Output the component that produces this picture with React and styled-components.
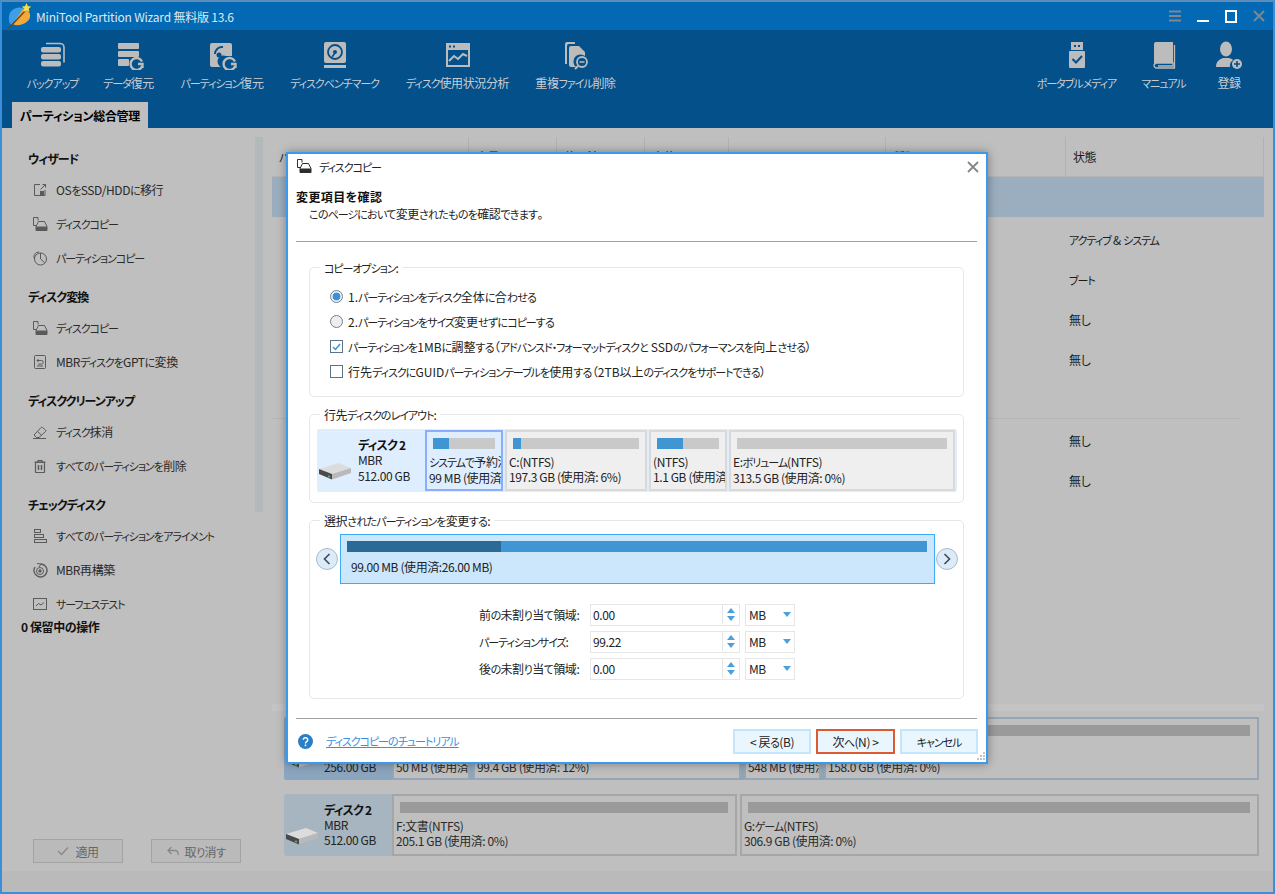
import React from "react";
import styled, { createGlobalStyle } from "styled-components";

const GlobalStyle = createGlobalStyle`
	html, body { margin: 0; padding: 0; background: #bfbfbf; }
	body {
		font-family: "Noto Sans CJK JP", "Noto Sans", sans-serif;
		font-size: 12px;
		letter-spacing: -0.4px;
		font-feature-settings: "palt";
		color: #1c1c1c;
	}
	* { box-sizing: border-box; }
`;

/* the UI font of the original has narrow kana, so kana runs get tightened */
const Kana = styled.span`
	font-size: 11px;
	letter-spacing: ${(p) => (p.$hira ? -0.7 : -1.05)}px;
`;
const Jp = ({ children }) =>
	children.split(/([\u3040-\u309f]+|[\u30a0-\u30ff]+)/).map((s, i) =>
		i % 2 ? (
			<Kana key={i} $hira={/[\u3040-\u309f]/.test(s)}>
				{s}
			</Kana>
		) : (
			s
		)
	);

const Window = styled.div`
	position: relative;
	width: 1275px;
	height: 894px;
	border: 2px solid #3a8fd8;
	border-top-color: #5b8db8;
	display: flex;
	flex-direction: column;
	overflow: hidden;
	background: #bfbfbf;
`;
const TitleBar = styled.div`
	height: 28px;
	background: #0469b4;
	display: flex;
	align-items: center;
	padding-left: 6px;
	color: #dfe8ef;
`;
const TitleText = styled.span`
	margin-left: 4px;
	letter-spacing: -0.2px;
	font-feature-settings: normal;
	white-space: nowrap;
`;
const WinButtons = styled.div`
	margin-left: auto;
	display: flex;
	align-items: center;
`;
const WinButton = styled.svg`
	display: block;
	width: 28px;
	height: 16px;
`;
const Toolbar = styled.div`
	height: 98px;
	background: #04508a;
	display: flex;
	flex-direction: column;
`;
const ToolRow = styled.div`
	display: flex;
	gap: 25px;
	padding: 10px 25px 0 26px;
`;
const ToolSpacer = styled.div`
	flex: 1;
`;
const ToolGroup = styled.div`
	display: flex;
	gap: ${(p) => p.$gap}px;
`;
const ToolItem = styled.div`
	width: ${(p) => p.$w}px;
	display: flex;
	flex-direction: column;
	align-items: center;
`;
const ToolLabel = styled.div`
	margin-top: 5px;
	line-height: 16px;
	color: #c9cdd0;
	white-space: nowrap;
`;
const ToolIcon = styled.svg`
	display: block;
	width: 30px;
	height: 30px;
	color: #bcbcbc;
`;
const Tab = styled.div`
	margin: auto 0 0 10px;
	width: 136px;
	height: 26px;
	background: #bfbfbf;
	color: #000;
	font-weight: 700;
	letter-spacing: -0.3px;
	display: flex;
	align-items: center;
	justify-content: center;
	white-space: nowrap;
`;
const Main = styled.div`
	flex: 1;
	min-height: 0;
	display: flex;
`;
const Sidebar = styled.div`
	width: 270px;
	flex: none;
	display: flex;
	flex-direction: column;
`;
const SideTop = styled.div`
	display: flex;
	height: 489px;
`;
const SideList = styled.div`
	flex: 1;
	padding: 17px 0 0 26px;
	overflow: hidden;
`;
const SideTrack = styled.div`
	flex: none;
	width: 8px;
	height: 375px;
	margin: 9px 9px 0 0;
	background: #b3b8bb;
`;
const SideHead = styled.div`
	height: 28px;
	line-height: 28px;
	font-weight: 700;
	letter-spacing: -1px;
	color: #111;
	margin-top: ${(p) => (p.$first ? 0 : 8)}px;
`;
const SideItem = styled.div`
	height: 34px;
	display: flex;
	align-items: center;
	padding: 0 0 1px 4px;
	gap: 8px;
	color: #2a2a2a;
	white-space: nowrap;
`;
const SideIcon = styled.svg`
	display: block;
	width: 16px;
	height: 16px;
	flex: none;
	color: #5a5a5a;
`;
const Pending = styled.div`
	height: 20px;
	line-height: 20px;
	padding-left: 19px;
	font-weight: 700;
	color: #111;
`;
const SideButtons = styled.div`
	margin-top: auto;
	margin-bottom: 8px;
	padding-left: 31px;
	display: flex;
	gap: 28px;
`;
const ApplyButton = styled.div`
	width: 90px;
	height: 24px;
	border: 1px solid #a3a3a3;
	background: #bababa;
	color: #666;
	display: flex;
	align-items: center;
	justify-content: center;
	gap: 6px;
`;
const Content = styled.div`
	flex: 1;
	min-width: 0;
	display: flex;
	flex-direction: column;
	padding-top: 9px;
`;
const TableHead = styled.div`
	width: 992px;
	height: 40px;
	display: grid;
	grid-template-columns: 197px 88px 88px 84px 157px 180px 198px;
	border-bottom: 1px solid #b5b5b5;
	flex: none;
`;
const HeadCell = styled.div`
	display: flex;
	align-items: center;
	padding-left: 7px;
	border-right: 1px solid #b2b2b2;
	color: #1c1c1c;
`;
const SelectedRow = styled.div`
	width: 992px;
	height: 41px;
	background: #9baebf;
	border-bottom: 1px solid #b3c0cb;
	margin-bottom: 2px;
	flex: none;
`;
const Row = styled.div`
	height: 40px;
	padding: 0 0 2px 797px;
	display: flex;
	align-items: center;
	white-space: pre;
	color: #1c1c1c;
	flex: none;
`;
const RowGap = styled.div`
	width: 968px;
	height: 39px;
	border-bottom: 1px solid #b5b5b5;
	margin-bottom: 2px;
	flex: none;
`;
const Strip = styled.div`
	margin-top: auto;
	width: 992px;
	height: 7px;
	background: #c4c4c4;
	flex: none;
`;
const DiskRow = styled.div`
	margin: ${(p) => p.$top}px 0 0 12px;
	width: 975px;
	height: ${(p) => p.$h}px;
	display: flex;
	flex: none;
	gap: 3px;
	background: ${(p) => (p.$active ? "#8ba5bf" : "transparent")};
	border-radius: 3px;
	margin-bottom: ${(p) => p.$bottom || 0}px;
`;
const DiskTag = styled.div`
	width: 108px;
	flex: none;
	margin-right: -3px;
	background: ${(p) => (p.$active ? "#8ba5bf" : "#a7b5c1")};
	border-radius: 3px 0 0 3px;
	display: flex;
	align-items: center;
	padding-left: 2px;
	gap: 6px;
	color: #222;
`;
const TagDrive = styled.div`
	padding-top: 22px;
`;
const TagText = styled.div`
	line-height: 15px;
	padding: ${(p) => (p.$active ? "5px 0 0" : "0 0 2px")};
`;
const TagTitle = styled.div`
	font-weight: 700;
	letter-spacing: -0.8px;
	color: #111;
`;
const MapPart = styled.div`
	width: ${(p) => p.$w}px;
	flex: ${(p) => (p.$grow ? 1 : "none")};
	border: 2px solid ${(p) => (p.$active ? "#96a6b4" : "#a6a6a6")};
	background: #bfbfbf;
	padding: 6px 7px 0 2px;
	overflow: hidden;
	color: #2a2a2a;
	white-space: nowrap;
	line-height: 14.5px;
`;
const MapBar = styled.div`
	height: 11px;
	background: #9a9a9a;
	margin: 0 0 ${(p) => (p.$active ? 9 : 6)}px 4px;
`;
const StatusBar = styled.div`
	height: 21px;
	background: #bababa;
	flex: none;
`;

const Dialog = styled.div`
	position: absolute;
	left: 284px;
	top: 150px;
	width: 702px;
	height: 612px;
	background: #fff;
	border: 2px solid #3a9bee;
	box-shadow: 0 0 9px rgba(0, 0, 0, 0.35);
	padding: 0 8px;
	display: flex;
	flex-direction: column;
`;
const DialogTitle = styled.div`
	height: 26px;
	flex: none;
	display: flex;
	align-items: center;
	gap: 7px;
	padding-bottom: 2px;
	color: #222;
	${SideIcon} {
		color: #2e2e2e;
	}
`;
const CloseIcon = styled.svg`
	display: block;
	margin: 2px -1px 0 auto;
	width: 12px;
	height: 12px;
`;
const Heading = styled.div`
	margin-top: 9px;
	line-height: 16px;
	font-weight: 700;
	letter-spacing: 0.4px;
	color: #111;
`;
const SubHeading = styled.div`
	margin: 1px 0 0 13px;
	line-height: 16px;
	color: #222;
`;
const Rule = styled.div`
	height: 1px;
	flex: none;
	background: #a0a0a0;
	margin: ${(p) => p.$top}px 1px 0 0;
`;
const Group = styled.div`
	height: ${(p) => p.$h}px;
	flex: none;
	margin: ${(p) => p.$top}px 14px 0 13px;
	border: 1px solid #e6e6e6;
	border-radius: 5px;
`;
const GroupLabel = styled.div`
	margin: -8px 0 0 10px;
	width: fit-content;
	padding: 0 4px;
	background: #fff;
	line-height: 16px;
	color: #222;
`;
const Options = styled.div`
	padding: 8px 0 0 20px;
`;
const Option = styled.div`
	height: 25px;
	display: flex;
	align-items: center;
	gap: 5px;
	letter-spacing: 0;
	color: #222;
	white-space: pre;
`;
const Radio = styled.span`
	width: 13px;
	height: 13px;
	flex: none;
	border-radius: 50%;
	border: 1px solid #6f8396;
	background: ${(p) => (p.$on ? "radial-gradient(circle, #3a93d8 0 3.6px, #e8eef3 4.2px)" : "#eeeeee")};
`;
const Check = styled.span`
	width: 13px;
	height: 13px;
	flex: none;
	border: 1px solid #5d7388;
	background: #fff;
	display: flex;
	align-items: center;
	justify-content: center;
`;
const DiskPanel = styled.div`
	margin: 6px 6px 0 7px;
	height: 63px;
	background: #dfeeff;
	border-radius: 2px;
	display: flex;
	align-items: center;
	gap: 2px;
`;
const PanelTag = styled.div`
	width: 108px;
	margin-right: -2px;
	flex: none;
	display: flex;
	align-items: flex-start;
	padding: 0 0 1px 2px;
	color: #222;
`;
const PanelDisk = styled.div`
	padding-top: 26px;
`;
const PanelText = styled.div`
	margin-left: 7px;
	line-height: 15.5px;
`;
const Partition = styled.div`
	width: ${(p) => p.$w}px;
	height: 61px;
	flex: none;
	border: 2px solid ${(p) => (p.$on ? "#8aaefa" : "#d9d9d9")};
	background: ${(p) => (p.$on ? "#dfeeff" : "#efefef")};
	padding: 6px 2px 0 2px;
	overflow: hidden;
	white-space: nowrap;
	line-height: 15px;
	color: #222;
`;
const UsageBar = styled.div`
	height: 11px;
	margin: 0 4px 5px 4px;
	background: #c9c9c9;
	overflow: hidden;
`;
const UsageFill = styled.div`
	height: 100%;
	background: ${(p) => p.$color || "#3f96d2"};
`;
const SizeRow = styled.div`
	margin: 5px 0 0 6px;
	display: flex;
	align-items: center;
	gap: 2px;
`;
const RoundButton = styled.div`
	width: 22px;
	height: 22px;
	flex: none;
	border-radius: 50%;
	border: 1px solid #a8bccb;
	background: #dcebf7;
	display: flex;
	align-items: center;
	justify-content: center;
`;
const SizeBox = styled.div`
	width: 595px;
	height: 50px;
	flex: none;
	margin-right: -1px;
	background: #cce6fc;
	border: 1px solid #3fa9f5;
	padding: 6px 7px 0 6px;
`;
const SizeBar = styled.div`
	height: 11px;
	background: #3f96d2;
`;
const SizeText = styled.div`
	margin: 7px 0 0 4px;
	line-height: 16px;
	color: #222;
`;
const Form = styled.div`
	margin: 20px 0 0 169px;
	display: flex;
	flex-direction: column;
	gap: 5px;
`;
const FormRow = styled.div`
	height: 22px;
	display: flex;
	align-items: center;
`;
const FormLabel = styled.div`
	width: 111px;
	flex: none;
	padding-bottom: 1px;
	white-space: nowrap;
	color: #222;
`;
const Spin = styled.div`
	width: 150px;
	height: 22px;
	flex: none;
	border: 1px solid #e6e6e6;
	display: flex;
	align-items: center;
	padding: 0 0 1px 2px;
	color: #222;
`;
const SpinButtons = styled.div`
	margin-left: auto;
	width: 17px;
	height: 100%;
	border-left: 1px solid #e6e6e6;
	display: flex;
	flex-direction: column;
	align-items: center;
	justify-content: space-evenly;
`;
const TriUp = styled.span`
	width: 0;
	height: 0;
	border: 4px solid transparent;
	border-top: 0;
	border-bottom: 5px solid #4aa0dc;
`;
const TriDown = styled.span`
	width: 0;
	height: 0;
	border: 4px solid transparent;
	border-bottom: 0;
	border-top: 5px solid #4aa0dc;
`;
const Unit = styled.div`
	margin-left: 5px;
	width: 50px;
	height: 22px;
	flex: none;
	border: 1px solid #e6e6e6;
	display: flex;
	align-items: center;
	justify-content: space-between;
	padding: 0 3px 1px;
	color: #222;
`;
const Footer = styled.div`
	margin-top: 10px;
	padding-left: 2px;
	display: flex;
	align-items: center;
`;
const HelpLink = styled.a`
	margin: 0 0 3px 13px;
	color: #3a8fe0;
	text-decoration: underline;
`;
const FooterButtons = styled.div`
	margin-left: auto;
	display: flex;
	gap: 5px;
`;
const DlgButton = styled.div`
	width: ${(p) => p.$w}px;
	height: 25px;
	display: flex;
	align-items: center;
	justify-content: center;
	white-space: pre;
	background: #e9f6fe;
	border: 2px solid ${(p) => (p.$primary ? "#dc5a32" : "#c3e6fb")};
	color: #222;
`;
const Grip = styled.svg`
	position: absolute;
	right: 0;
	bottom: 1px;
	width: 10px;
	height: 10px;
`;

/* toolbar icons */
const BackupIcon = () => (
	<ToolIcon viewBox="0 0 30 30" fill="currentColor">
		<rect x="3" y="7" width="20" height="5.5" rx="2" />
		<rect x="3" y="14" width="20" height="5.5" rx="2" />
		<rect x="3" y="21" width="20" height="5.5" rx="2" />
		<path d="M8 3.5h14a4 4 0 0 1 4 4v15" fill="none" stroke="currentColor" strokeWidth="1.6" />
	</ToolIcon>
);
const RecoverMark = () => (
	<path d="M28 21.5a6 6 0 1 0 0 5M24 24h4.500v4" fill="none" stroke="currentColor" strokeWidth="2.400" />
);
const DataIcon = () => (
	<ToolIcon viewBox="0 0 30 30" fill="currentColor">
		<rect x="4" y="3" width="21" height="6" rx="1" />
		<rect x="4" y="11" width="21" height="6" rx="1" />
		<rect x="4" y="19" width="11" height="7" rx="1" />
		<RecoverMark />
	</ToolIcon>
);
const PartRecoverIcon = () => (
	<ToolIcon viewBox="0 0 30 30" fill="currentColor">
		<path d="M5 3h18a2 2 0 0 1 2 2v11h-6a6 6 0 0 0-5 11H5a2 2 0 0 1-2-2V5a2 2 0 0 1 2-2z" />
		<path d="M8 14a7 7 0 0 1 8-7" fill="none" stroke="#04508a" strokeWidth="2" />
		<circle cx="12" cy="15" r="2.500" fill="#04508a" />
		<RecoverMark />
	</ToolIcon>
);
const BenchIcon = () => (
	<ToolIcon viewBox="0 0 30 30" fill="currentColor">
		<rect x="4" y="2" width="22" height="21" rx="2" />
		<circle cx="15" cy="12" r="7" fill="none" stroke="#04508a" strokeWidth="1.800" />
		<circle cx="15" cy="12" r="2" fill="#04508a" />
		<path d="M12 17l3-4" stroke="#04508a" strokeWidth="1.500" />
		<rect x="4" y="25" width="22" height="3" />
	</ToolIcon>
);
const ChartIcon = () => (
	<ToolIcon viewBox="0 0 30 30" fill="currentColor">
		<path fillRule="evenodd" d="M3 3h24v24H3zM5 10v15h20V10zM6 5.500v2h2v-2zM10 5.500v2h2v-2z" />
		<path d="M6 21l5-5 4 3 5-5 4 2" fill="none" stroke="currentColor" strokeWidth="2" />
	</ToolIcon>
);
const DupIcon = () => (
	<ToolIcon viewBox="0 0 30 30" fill="currentColor">
		<path d="M6 2h8v2H8a2 2 0 0 0-2 2v18H4V4a2 2 0 0 1 2-2z" />
		<path d="M10 6h8l6 6v4a7 7 0 0 0-9 11h-5a2 2 0 0 1-2-2V8a2 2 0 0 1 2-2z" />
		<circle cx="21" cy="22" r="5" fill="none" stroke="currentColor" strokeWidth="1.800" />
		<path d="M18.500 22h5" stroke="currentColor" strokeWidth="1.500" />
		<path d="M17 26l-3 3" stroke="currentColor" strokeWidth="2" />
	</ToolIcon>
);
const UsbIcon = () => (
	<ToolIcon viewBox="0 0 30 30" fill="currentColor">
		<path fillRule="evenodd" d="M9 2h12v8h-12zM12 5v2h2v-2zM16 5v2h2v-2z" />
		<path d="M8 11h14a1 1 0 0 1 1 1v15a1 1 0 0 1-1 1H8a1 1 0 0 1-1-1V12a1 1 0 0 1 1-1z" />
		<path d="M10.500 19l3.500 3.500 6-6.500" fill="none" stroke="#04508a" strokeWidth="2" />
	</ToolIcon>
);
const BookIcon = () => (
	<ToolIcon viewBox="0 0 30 30" fill="currentColor">
		<path d="M7 2h17v21H8a3 3 0 0 0-3 2V4a2 2 0 0 1 2-2z" />
		<path d="M25.500 5v23H8a3 3 0 0 1-3-3 3 3 0 0 1 3-2h16v3H9" fill="none" stroke="currentColor" strokeWidth="1.300" />
	</ToolIcon>
);
const UserIcon = () => (
	<ToolIcon viewBox="0 0 30 30" fill="currentColor">
		<ellipse cx="12" cy="9" rx="6" ry="7.500" />
		<path d="M2 27c0-6 4-8 7-9h6c2 .5 3 1 4 2a7 7 0 0 0-3 7z" />
		<circle cx="23" cy="24" r="5" />
		<path d="M23 21v6M20 24h6" stroke="#04508a" strokeWidth="1.600" />
	</ToolIcon>
);

/* sidebar icons */
const MigrateIcon = () => (
	<SideIcon viewBox="0 0 16 16" fill="none" stroke="currentColor">
		<path d="M8 2.500H2.500v11H13V8" />
		<path d="M8.500 7.500l5-5M10.500 2.500h3v3" />
		<rect x="8" y="9" width="4" height="4" fill="currentColor" stroke="none" />
	</SideIcon>
);
const CopyIcon = () => (
	<SideIcon viewBox="0 0 16 16" fill="none" stroke="currentColor">
		<path d="M6 4.500V1.500H1.500v8H4" />
		<path d="M6.500 5.500h6l2.500 5v4H4v-4z" />
		<rect x="4" y="10.500" width="11" height="4" fill="currentColor" stroke="none" />
	</SideIcon>
);
const PartCopyIcon = () => (
	<SideIcon viewBox="0 0 16 16" fill="none" stroke="currentColor">
		<circle cx="8.500" cy="9" r="6" />
		<path d="M8.500 3v6l4 3.500" />
		<path d="M2 8a5 5 0 0 1 5-6" />
	</SideIcon>
);
const ConvertIcon = () => (
	<SideIcon viewBox="0 0 16 16" fill="none" stroke="currentColor">
		<rect x="2.500" y="1.500" width="11" height="13" rx="1" />
		<path d="M5 6.500h4.500a1.800 1.800 0 0 1 0 3.600H6M6.500 5L5 6.500 6.500 8M5 12h6" />
	</SideIcon>
);
const EraseIcon = () => (
	<SideIcon viewBox="0 0 16 16" fill="none" stroke="currentColor">
		<path d="M2 11l7-7.500a1 1 0 0 1 1.500 0l3 2.500a1 1 0 0 1 0 1.500L7 13.500H4.500z" />
		<path d="M1 14.500h13M5.500 7.500l4 3.500" />
	</SideIcon>
);
const TrashIcon = () => (
	<SideIcon viewBox="0 0 16 16" fill="none" stroke="currentColor">
		<path d="M2.500 4h11M6 4V2.500h4V4M3.500 4.500h9V14a.5.5 0 0 1-.5.500H4a.5.5 0 0 1-.5-.5z" strokeWidth="1.200" />
		<path d="M6.500 7v5M9.500 7v5" strokeWidth="1.500" />
	</SideIcon>
);
const AlignIcon = () => (
	<SideIcon viewBox="0 0 16 16" fill="none" stroke="currentColor">
		<rect x="2.500" y="1.500" width="6" height="3" />
		<rect x="2.500" y="6.500" width="9" height="3" />
		<rect x="2.500" y="11.500" width="12" height="3" />
	</SideIcon>
);
const RebuildIcon = () => (
	<SideIcon viewBox="0 0 16 16" fill="none" stroke="currentColor">
		<path d="M9 2a6.500 6.500 0 1 1-6 3" strokeWidth="1.400" />
		<circle cx="8" cy="9" r="3.500" />
		<circle cx="8" cy="9" r="1.200" fill="currentColor" />
		<path d="M5 1.500l4 .5-2 3" />
	</SideIcon>
);
const SurfaceIcon = () => (
	<SideIcon viewBox="0 0 16 16" fill="none" stroke="currentColor">
		<rect x="1.500" y="2.500" width="13" height="11" />
		<path d="M4 10l2.500-2.500 2.500 1.500 3-2.500" />
	</SideIcon>
);

const Logo = () => (
	<svg width="24" height="26" viewBox="0 0 24 26" style={{ display: "block" }}>
		<path d="M1 13C2 7 8 3 15 5l3 2L7 21l-4 1C1 20 .5 17 1 13z" fill="#3f9fe6" />
		<path d="M15 6c5 1 8 4 7 8-1 5-8 9-15 8l-2-1z" fill="#f5a83a" />
		<path d="M.5 25.500L17 8" stroke="#6b4512" strokeWidth="1.400" />
		<path d="M18.500 0l1.400 3.200 3.300.3-2.500 2.200.8 3.300-3-1.700-3 1.700.8-3.300-2.500-2.200 3.300-.3z" fill="#f6e04a" />
	</svg>
);

const Hdd = () => (
	<svg width="32" height="17" viewBox="0 0 32 17" style={{ display: "block" }}>
		<path d="M0 6L20 0l12 5-19 6z" fill="#dcdcdc" />
		<path d="M13 11l19-6v5l-19 6.500z" fill="#b9b9b9" />
		<path d="M0 6l13 5v5.500L0 11z" fill="#4a4a4a" />
		<circle cx="10" cy="13.500" r="1" fill="#3fd07a" />
	</svg>
);

const Chevron = ({ dir }) => (
	<svg width="8" height="12" viewBox="0 0 8 12" style={{ display: "block" }}>
		<path d={dir === "left" ? "M6.500 1L1.500 6l5 5" : "M1.500 1l5 5-5 5"} fill="none" stroke="#3a4a58" strokeWidth="1.600" />
	</svg>
);

const tools = [
	{ w: 49, label: "バックアップ", Icon: BackupIcon },
	{ w: 53, label: "データ復元", Icon: DataIcon },
	{ w: 84, label: "パーティション復元", Icon: PartRecoverIcon },
	{ w: 91, label: "ディスクベンチマーク", Icon: BenchIcon },
	{ w: 105, label: "ディスク使用状況分析", Icon: ChartIcon },
	{ w: 81, label: "重複ファイル削除", Icon: DupIcon },
];

const sideGroups = [
	{
		head: "ウィザード",
		items: [
			["OSをSSD/HDDに移行", MigrateIcon],
			["ディスクコピー", CopyIcon],
			["パーティションコピー", PartCopyIcon],
		],
	},
	{
		head: "ディスク変換",
		items: [
			["ディスクコピー", CopyIcon],
			["MBRディスクをGPTに変換", ConvertIcon],
		],
	},
	{
		head: "ディスククリーンアップ",
		items: [
			["ディスク抹消", EraseIcon],
			["すべてのパーティションを削除", TrashIcon],
		],
	},
	{
		head: "チェックディスク",
		items: [
			["すべてのパーティションをアライメント", AlignIcon],
			["MBR再構築", RebuildIcon],
			["サーフェステスト", SurfaceIcon],
		],
	},
];

const columns = ["パーティション", "容量", "使用済み", "未使用", "ファイルシステム", "種類", "状態"];

const targetParts = [
	{ w: 78, used: 26, name: "システムで予約済み", size: "99 MB (使用済: 26%)", on: true },
	{ w: 142, used: 6, name: "C:(NTFS)", size: "197.3 GB (使用済: 6%)" },
	{ w: 78, used: 42, name: "(NTFS)", size: "1.1 GB (使用済: 42%)" },
	{ w: 226, used: 0, name: "E:ボリューム(NTFS)", size: "313.5 GB (使用済: 0%)" },
];

const sizeFields = [
	{ label: "前の未割り当て領域:", value: "0.00" },
	{ label: "パーティションサイズ:", value: "99.22" },
	{ label: "後の未割り当て領域:", value: "0.00" },
];

const App = () => {
	return (
		<Window>
			<GlobalStyle />
			<TitleBar>
				<Logo />
				<TitleText>MiniTool Partition Wizard 無料版 13.6</TitleText>
				<WinButtons>
					<WinButton viewBox="0 0 28 16">
						<path d="M8 3.500h12M8 8h12M8 12.500h12" stroke="#7d8790" strokeWidth="2" />
					</WinButton>
					<WinButton viewBox="0 0 28 16">
						<path d="M8 13h12" stroke="#fff" strokeWidth="2" />
					</WinButton>
					<WinButton viewBox="0 0 28 16">
						<rect x="9" y="3" width="10" height="11" fill="none" stroke="#fff" strokeWidth="2" />
					</WinButton>
					<WinButton viewBox="0 0 28 16">
						<path d="M9 3l10 10M19 3L9 13" stroke="#7d8790" strokeWidth="2" />
					</WinButton>
				</WinButtons>
			</TitleBar>
			<Toolbar>
				<ToolRow>
					{tools.map(({ w, label, Icon }) => (
						<ToolItem key={label} $w={w}>
							<Icon />
							<ToolLabel>
								<Jp>{label}</Jp>
							</ToolLabel>
						</ToolItem>
					))}
					<ToolSpacer />
					<ToolGroup $gap={24}>
						<ToolItem $w={81}>
							<UsbIcon />
							<ToolLabel>
								<Jp>ポータブルメディア</Jp>
							</ToolLabel>
						</ToolItem>
						<ToolItem $w={45}>
							<BookIcon />
							<ToolLabel>
								<Jp>マニュアル</Jp>
							</ToolLabel>
						</ToolItem>
						<ToolItem $w={38}>
							<UserIcon />
							<ToolLabel>登録</ToolLabel>
						</ToolItem>
					</ToolGroup>
				</ToolRow>
				<Tab>パーティション総合管理</Tab>
			</Toolbar>
			<Main>
				<Sidebar>
					<SideTop>
						<SideList>
							{sideGroups.map((group, i) => (
								<div key={group.head}>
									<SideHead $first={i === 0}>{group.head}</SideHead>
									{group.items.map(([label, Icon]) => (
										<SideItem key={label}>
											<Icon />
											<span>
												<Jp>{label}</Jp>
											</span>
										</SideItem>
									))}
								</div>
							))}
						</SideList>
						<SideTrack />
					</SideTop>
					<Pending>0 保留中の操作</Pending>
					<SideButtons>
						<ApplyButton>
							<svg width="12" height="10" viewBox="0 0 12 10">
								<path d="M1 5l3.500 3.500L11 1.500" fill="none" stroke="#888" strokeWidth="1.300" />
							</svg>
							適用
						</ApplyButton>
						<ApplyButton>
							<svg width="12" height="10" viewBox="0 0 12 10">
								<path d="M4.500 1L1 4.500 4.500 8M1 4.500h7a3 3 0 0 1 3 3V9" fill="none" stroke="#888" strokeWidth="1.300" />
							</svg>
							<span>
								<Jp>取り消す</Jp>
							</span>
						</ApplyButton>
					</SideButtons>
				</Sidebar>
				<Content>
					<TableHead>
						{columns.map((c) => (
							<HeadCell key={c}>
								<span>
									<Jp>{c}</Jp>
								</span>
							</HeadCell>
						))}
					</TableHead>
					<SelectedRow />
					<Row>
						<span>
							<Jp>アクティブ &amp; システム</Jp>
						</span>
					</Row>
					<Row>
						<span>
							<Jp>ブート</Jp>
						</span>
					</Row>
					<Row>無し</Row>
					<Row>無し</Row>
					<RowGap />
					<Row>無し</Row>
					<Row>無し</Row>
					<Strip />
					<DiskRow $top={6} $h={63} $active>
						<DiskTag $active>
							<TagDrive>
								<Hdd />
							</TagDrive>
							<TagText $active>
								<TagTitle>ディスク 1</TagTitle>
								MBR
								<br />
								256.00 GB
							</TagText>
						</DiskTag>
						<MapPart $w={78} $active>
							<MapBar $active />
							<Jp>システムで予約済み</Jp>
							<br />
							<Jp>50 MB (使用済: 52%)</Jp>
						</MapPart>
						<MapPart $w={268} $active>
							<MapBar $active />
							C:(NTFS)
							<br />
							<Jp>99.4 GB (使用済: 12%)</Jp>
						</MapPart>
						<MapPart $w={77} $active>
							<MapBar $active />
							(NTFS)
							<br />
							<Jp>548 MB (使用済: 80%)</Jp>
						</MapPart>
						<MapPart $grow $active>
							<MapBar $active />
							D:(NTFS)
							<br />
							<Jp>158.0 GB (使用済: 0%)</Jp>
						</MapPart>
					</DiskRow>
					<DiskRow $top={14} $h={62} $bottom={15}>
						<DiskTag>
							<TagDrive>
								<Hdd />
							</TagDrive>
							<TagText>
								<TagTitle>ディスク 2</TagTitle>
								MBR
								<br />
								512.00 GB
							</TagText>
						</DiskTag>
						<MapPart $w={345}>
							<MapBar />
							F:文書(NTFS)
							<br />
							<Jp>205.1 GB (使用済: 0%)</Jp>
						</MapPart>
						<MapPart $grow>
							<MapBar />
							<Jp>G:ゲーム(NTFS)</Jp>
							<br />
							<Jp>306.9 GB (使用済: 0%)</Jp>
						</MapPart>
					</DiskRow>
				</Content>
			</Main>
			<StatusBar />
			<Dialog>
				<DialogTitle>
					<CopyIcon />
					<span>
						<Jp>ディスクコピー</Jp>
					</span>
					<CloseIcon viewBox="0 0 12 12">
						<path d="M1 1l10 10M11 1L1 11" stroke="#858585" strokeWidth="1.800" />
					</CloseIcon>
				</DialogTitle>
				<Heading>変更項目を確認</Heading>
				<SubHeading>
					<Jp>このページにおいて変更されたものを確認できます。</Jp>
				</SubHeading>
				<Rule $top={19} />
				<Group $top={25} $h={130}>
					<GroupLabel>
						<Jp>コピーオプション:</Jp>
					</GroupLabel>
					<Options>
						<Option>
							<Radio $on />
							<span>
								<Jp>1.パーティションをディスク全体に合わせる</Jp>
							</span>
						</Option>
						<Option>
							<Radio />
							<span>
								<Jp>2.パーティションをサイズ変更せずにコピーする</Jp>
							</span>
						</Option>
						<Option>
							<Check>
								<svg width="9" height="8" viewBox="0 0 9 8">
									<path d="M1 4l2.500 2.500L8 1" fill="none" stroke="#3a93d8" strokeWidth="1.500" />
								</svg>
							</Check>
							<span>
								<Jp>パーティションを1MBに調整する（アドバンスド・フォーマットディスクと SSDのパフォーマンスを向上させる）</Jp>
							</span>
						</Option>
						<Option>
							<Check />
							<span>
								<Jp>行先ディスクにGUIDパーティションテーブルを使用する（2TB以上のディスクをサポートできる）</Jp>
							</span>
						</Option>
					</Options>
				</Group>
				<Group $top={17} $h={89}>
					<GroupLabel>
						<Jp>行先ディスクのレイアウト:</Jp>
					</GroupLabel>
					<DiskPanel>
						<PanelTag>
							<PanelDisk>
								<Hdd />
							</PanelDisk>
							<PanelText>
								<TagTitle>ディスク 2</TagTitle>
								MBR
								<br />
								512.00 GB
							</PanelText>
						</PanelTag>
						{targetParts.map((part) => (
							<Partition key={part.size} $w={part.w} $on={part.on}>
								<UsageBar>
									<UsageFill style={{ width: `${part.used}%` }} />
								</UsageBar>
								<Jp>{part.name}</Jp>
								<br />
								<Jp>{part.size}</Jp>
							</Partition>
						))}
					</DiskPanel>
				</Group>
				<Group $top={17} $h={179}>
					<GroupLabel>
						<Jp>選択されたパーティションを変更する:</Jp>
					</GroupLabel>
					<SizeRow>
						<RoundButton>
							<Chevron dir="left" />
						</RoundButton>
						<SizeBox>
							<SizeBar>
								<UsageFill $color="#2b6a96" style={{ width: "26.500%" }} />
							</SizeBar>
							<SizeText>99.00 MB (使用済:26.00 MB)</SizeText>
						</SizeBox>
						<RoundButton>
							<Chevron dir="right" />
						</RoundButton>
					</SizeRow>
					<Form>
						{sizeFields.map((field) => (
							<FormRow key={field.label}>
								<FormLabel>
									<Jp>{field.label}</Jp>
								</FormLabel>
								<Spin>
									{field.value}
									<SpinButtons>
										<TriUp />
										<TriDown />
									</SpinButtons>
								</Spin>
								<Unit>
									MB
									<TriDown />
								</Unit>
							</FormRow>
						))}
					</Form>
				</Group>
				<Rule $top={19} />
				<Footer>
					<svg width="15" height="15" viewBox="0 0 15 15" style={{ display: "block" }}>
						<circle cx="7.500" cy="7.500" r="7.500" fill="#2a7fc4" />
						<path d="M5.300 5.800a2.200 2.200 0 1 1 3.400 1.900c-.8.500-1.200.9-1.200 1.800" fill="none" stroke="#fff" strokeWidth="1.500" />
						<rect x="6.700" y="10.500" width="1.600" height="1.700" fill="#fff" />
					</svg>
					<HelpLink href="#">
						<Jp>ディスクコピーのチュートリアル</Jp>
					</HelpLink>
					<FooterButtons>
						<DlgButton $w={78}>
							<span>
								<Jp>{"< 戻る(B)"}</Jp>
							</span>
						</DlgButton>
						<DlgButton $w={79} $primary>
							<span>
								<Jp>{"次へ(N) >"}</Jp>
							</span>
						</DlgButton>
						<DlgButton $w={78}>
							<span>
								<Jp>キャンセル</Jp>
							</span>
						</DlgButton>
					</FooterButtons>
				</Footer>
				<Grip viewBox="0 0 10 10" fill="#c4c4c4">
					<rect x="7" y="1" width="2" height="2" />
					<rect x="4" y="4" width="2" height="2" />
					<rect x="7" y="4" width="2" height="2" />
					<rect x="1" y="7" width="2" height="2" />
					<rect x="4" y="7" width="2" height="2" />
					<rect x="7" y="7" width="2" height="2" />
				</Grip>
			</Dialog>
		</Window>
	);
};

export default App;
